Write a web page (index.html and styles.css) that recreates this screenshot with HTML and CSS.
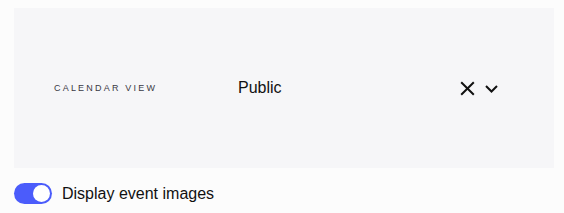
FILE: index.html
```html
<!DOCTYPE html>
<html lang="en">
<head>
    <meta charset="UTF-8">
    <meta name="viewport" content="width=device-width, initial-scale=1.0">
    <title>Calendar settings</title>
    <link rel="stylesheet" href="styles.css">
</head>
<body>
    <div class="settings">
        <div class="field">
            <span class="field-label">Calendar view</span>
            <span class="field-value">Public</span>
            <div class="field-actions">
                <button class="icon-btn" aria-label="Clear">
                    <svg width="15" height="15" viewBox="0 0 15 15">
                        <path d="M1.2 1.2 L13.8 13.8 M13.8 1.2 L1.2 13.8" stroke="#111" stroke-width="2" fill="none"/>
                    </svg>
                </button>
                <button class="icon-btn" aria-label="Open">
                    <svg width="13" height="13" viewBox="0 0 13 13">
                        <path d="M1 4 L6.5 9.5 L12 4" stroke="#111" stroke-width="2" fill="none"/>
                    </svg>
                </button>
            </div>
        </div>

        <label class="toggle-row">
            <span class="toggle on"><span class="knob"></span></span>
            <span class="toggle-text">Display event images</span>
        </label>
    </div>
</body>
</html>
```

FILE: styles.css
```css
* {
    margin: 0;
    padding: 0;
    box-sizing: border-box;
    font-family: 'Liberation Sans', Arial, sans-serif;
}

body {
    background-color: #fcfcfc;
    padding: 8px 10px 0 14px;
}

.field {
    display: flex;
    align-items: center;
    height: 160px;
    background-color: #f6f6f8;
    padding: 0 56px 0 40px;
}

.field-label {
    width: 184px;
    font-size: 9px;
    letter-spacing: 2.2px;
    text-transform: uppercase;
    color: #3a3a44;
}

.field-value {
    flex: 1;
    font-size: 16px;
    color: #111;
}

.field-actions {
    display: flex;
    align-items: center;
    gap: 10px;
}

.icon-btn {
    display: flex;
    border: none;
    background: none;
    cursor: pointer;
}

.toggle-row {
    display: flex;
    align-items: center;
    gap: 10px;
    margin-top: 15px;
    cursor: pointer;
}

.toggle {
    display: flex;
    align-items: center;
    width: 38px;
    height: 21px;
    border-radius: 11px;
    background-color: #c4c4cc;
    padding: 2px;
}

.toggle.on {
    background-color: #4b5cfb;
    justify-content: flex-end;
}

.knob {
    width: 17px;
    height: 17px;
    border-radius: 50%;
    background-color: white;
}

.toggle-text {
    font-size: 16px;
    color: #111;
}
```
